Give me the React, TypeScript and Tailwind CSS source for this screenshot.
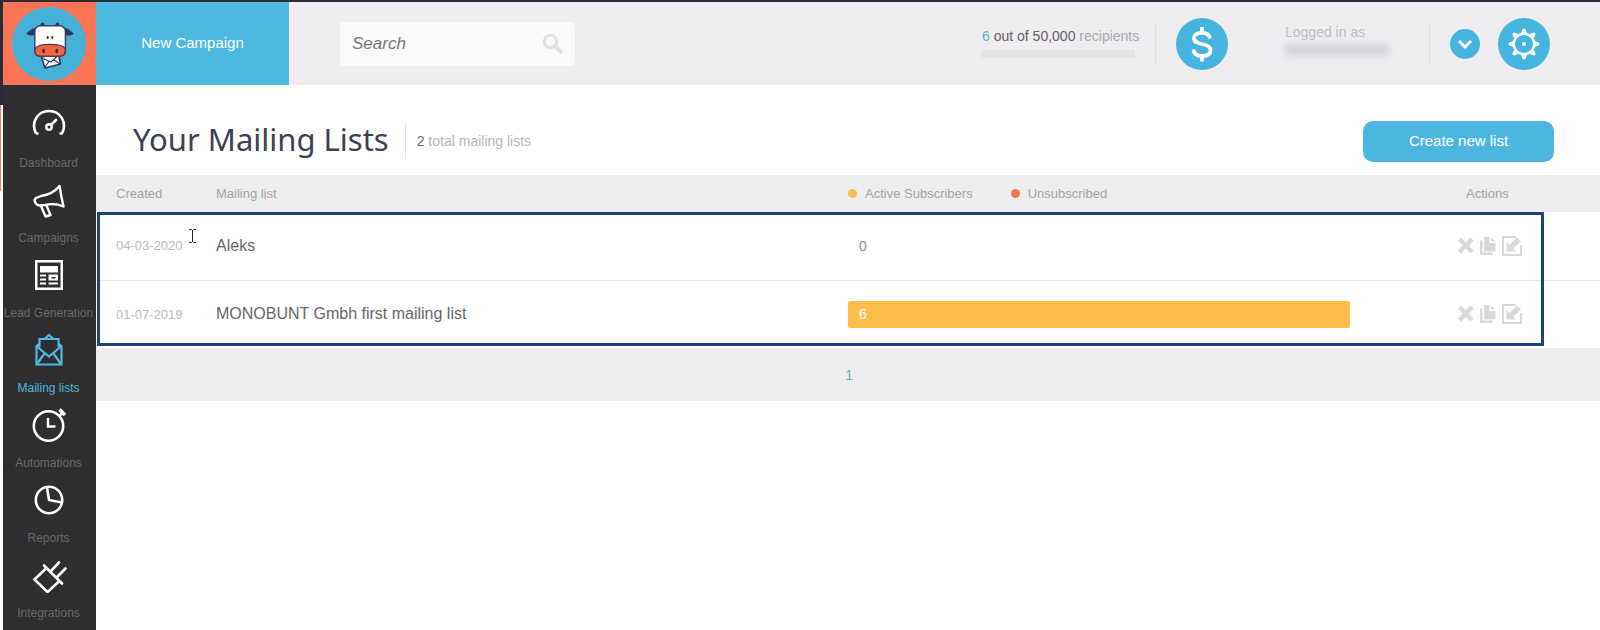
import React from "react";

type IconProps = { className?: string };

const stroke = {
  fill: "none",
  stroke: "currentColor",
  strokeWidth: 2.6,
  strokeLinecap: "round" as const,
  strokeLinejoin: "round" as const,
};

function CowLogo() {
  return (
    <svg viewBox="0 0 74 74" className="size-[74px]" aria-hidden="true">
      <circle cx="37" cy="37" r="37" fill="#45b1d8" />
      <path d="M14 26.500C17 25 19 21 24 21V27.500C21 29 17 29 14 26.500Z" fill="#2d3763" />
      <path d="M62 26.500C59 25 57 21 52 21V27.500C55 29 59 29 62 26.500Z" fill="#2d3763" />
      <circle cx="30.500" cy="17.500" r="2" fill="#2d3763" />
      <circle cx="45.500" cy="17.500" r="2" fill="#2d3763" />
      <path d="M29.500 50L46.500 47L48.500 57L33 61Z" fill="#fff" stroke="#2d3763" strokeWidth="1.600" strokeLinejoin="round" />
      <path d="M31 51.500L39 55L46 48.500M33 60L37 54.500M48 57L42 53" fill="none" stroke="#2d3763" strokeWidth="1.200" />
      <rect x="22.800" y="18.800" width="30.600" height="30.400" rx="5.500" fill="#fff" stroke="#3d3c58" strokeWidth="1.400" />
      <path d="M23 42C25 35.800 51 35.800 53.200 42V44C53.200 47.500 50.500 49.200 47.500 49.200H29C25.500 49.200 23 47.500 23 44Z" fill="#f0643f" stroke="#5a3a4c" strokeWidth="1.400" />
      <ellipse cx="35.700" cy="30.500" rx="1" ry="1.400" fill="#2d3040" />
      <ellipse cx="40.300" cy="30.500" rx="1" ry="1.400" fill="#2d3040" />
      <ellipse cx="31.500" cy="44" rx="1.500" ry="2.200" fill="#3d2f45" />
      <ellipse cx="44.800" cy="44" rx="1.500" ry="2.200" fill="#3d2f45" />
    </svg>
  );
}

function GaugeIcon({ className }: IconProps) {
  return (
    <svg viewBox="0 0 36 36" className={className} {...stroke}>
      <path d="M5 26.500C-.500 15.500 6.500 4 18 4S36.500 15.500 31 26.500H28.500M5 26.500H7.500" strokeLinecap="butt" />
      <circle cx="18" cy="20" r="2.700" strokeWidth="2.400" />
      <path d="M20 18L25 13" />
    </svg>
  );
}

function MegaphoneIcon({ className }: IconProps) {
  return (
    <svg viewBox="0 0 36 36" className={className} {...stroke} strokeWidth={2.4}>
      <path d="M28.500 4C29.500 10 31 18 32.500 24.500C27 22 20.500 21.500 14 23L9 23.500C4.500 23.500 2 18 5 16L10 14C17 13 24 9.500 28.500 4Z" />
      <path d="M10 24L14.500 34.500L19.500 33L15.500 23.500" />
    </svg>
  );
}

function LayoutIcon({ className }: IconProps) {
  return (
    <svg viewBox="0 0 36 36" className={className} fill="currentColor">
      <path fillRule="evenodd" d="M4 3H32V33H4ZM6.500 5.500V30.500H29.500V5.500Z" />
      <path d="M9 9H27V15.500H9ZM9 17.500H15V19.500H9ZM9 21.500H15V23.500H9ZM9 25.500H15V27.500H9ZM17.500 25.500H27V27.500H17.500Z" />
      <path fillRule="evenodd" d="M17.500 17.500H27V23.500H17.500ZM20.500 20V21.500H24.500V20Z" />
    </svg>
  );
}

function EnvelopeIcon({ className }: IconProps) {
  return (
    <svg viewBox="0 0 36 36" className={className} {...stroke} strokeWidth={2.2} strokeLinejoin="miter">
      <path d="M8.500 14.500V7H27.500V14.500M8 12L5.500 14V32.500H30.500V14L28 12" />
      <path d="M13.500 7L18 3L22.500 7" />
      <path d="M6 14.500L18 24.500L30 14.500M6 32L13.500 21.500M30 32L22.500 21.500" />
    </svg>
  );
}

function StopwatchIcon({ className }: IconProps) {
  return (
    <svg viewBox="0 0 36 36" className={className} {...stroke}>
      <circle cx="17.500" cy="19" r="14.700" />
      <path d="M17 11V19.500H24.500" strokeWidth="2.400" strokeLinecap="butt" strokeLinejoin="miter" />
      <path d="M28.500 2.500L34 8" strokeWidth="3.600" strokeLinecap="butt" />
      <path d="M29.500 8L31 6" />
    </svg>
  );
}

function PieIcon({ className }: IconProps) {
  return (
    <svg viewBox="0 0 36 36" className={className} {...stroke}>
      <circle cx="18" cy="18" r="13.200" />
      <path d="M16 5.500L18 18L31 20.500" />
    </svg>
  );
}

function PlugIcon({ className }: IconProps) {
  return (
    <svg viewBox="0 0 36 36" className={className} {...stroke} strokeLinejoin="miter">
      <path d="M13 8.500L31 26.500M15.500 11L3.500 22.500L16.500 35L28.500 24" />
      <path d="M19.500 14.500L28 5.500M25.500 20.500L34.500 11.500" />
    </svg>
  );
}

function SearchIcon() {
  return (
    <svg viewBox="0 0 22 22" className="size-[22px] text-[#e1e1e3]" fill="none" stroke="currentColor">
      <circle cx="8.500" cy="8.500" r="6.200" strokeWidth="3" />
      <path d="M13 13L20 20" strokeWidth="4" />
    </svg>
  );
}

function DollarIcon() {
  return (
    <svg viewBox="0 0 52 52" className="size-[52px]" fill="none" stroke="#fff" strokeWidth="3.800">
      <path d="M34 20.500C33.500 16.500 31 14.800 26 14.800C21 14.800 18 17 18 20.200C18 24 21.500 25 26 26C31 27 34.500 28.500 34.500 32.300C34.500 36 31.500 38 26 38C20.500 38 17.800 36 17.500 31.300" />
      <path d="M26 9V16M26 37V43.500" />
    </svg>
  );
}

function GearIcon() {
  const angles = [0, 45, 90, 135, 180, 225, 270, 315];
  return (
    <svg viewBox="0 0 52 52" className="size-[52px]" fill="none" stroke="#fff">
      <circle cx="26" cy="26" r="10.200" strokeWidth="2.400" />
      <circle cx="26" cy="26" r="2" fill="#fff" stroke="none" />
      {angles.map((a) => (
        <path key={a} d="M22.800 16L24.700 10.700H27.300L29.200 16Z" fill="#fff" stroke="none" transform={`rotate(${a} 26 26)`} />
      ))}
    </svg>
  );
}

function DeleteIcon() {
  return (
    <svg viewBox="0 0 18 20" className="h-5 w-[18px]" fill="none" stroke="currentColor" strokeWidth="4.600">
      <path d="M2.500 3L15 16M15 3L2.500 16" />
    </svg>
  );
}

function CopyIcon() {
  return (
    <svg viewBox="0 0 18 20" className="h-5 w-[18px]" fill="currentColor">
      <path d="M1 4.500H3.500V16.500H13.500V19H1Z" />
      <path d="M5 1H10.500V7H16.500V15.500H5ZM12 1L16.500 5.500H12Z" />
    </svg>
  );
}

function EditIcon() {
  return (
    <svg viewBox="0 0 22 20" className="h-5 w-[22px]" fill="currentColor">
      <path d="M1 0H15V2H3V18H19V9H21V20H1Z" />
      <path d="M5.500 15.500V6.500L8.500 9L16 1.500L20 5L12.500 12.500L15 15.500Z" />
    </svg>
  );
}

const navItems = [
  { label: "Dashboard", Icon: GaugeIcon },
  { label: "Campaigns", Icon: MegaphoneIcon },
  { label: "Lead Generation", Icon: LayoutIcon },
  { label: "Mailing lists", Icon: EnvelopeIcon, active: true },
  { label: "Automations", Icon: StopwatchIcon },
  { label: "Reports", Icon: PieIcon },
  { label: "Integrations", Icon: PlugIcon },
];

const lists = [
  { created: "04-03-2020", name: "Aleks", active: 0, share: 0 },
  { created: "01-07-2019", name: "MONOBUNT Gmbh first mailing list", active: 6, share: 100 },
];

function Sidebar() {
  return (
    <aside className="flex w-[93px] shrink-0 flex-col bg-[#2e2d2f]">
      <a href="#home" aria-label="Home" className="flex h-[83px] items-center justify-center bg-[#fb7556] pr-[2px]">
        <CowLogo />
      </a>
      <nav className="flex flex-col pt-[22px] pr-[2px]">
        {navItems.map(({ label, Icon, active }) => (
          <a
            key={label}
            href="#"
            aria-current={active ? "page" : undefined}
            className={
              active
                ? "flex h-[75px] flex-col items-center gap-[11px] text-[#4fb9df]"
                : "flex h-[75px] flex-col items-center gap-[11px] text-[#6a696b]"
            }
          >
            <Icon className={active ? "size-9 shrink-0" : "size-9 shrink-0 text-white"} />
            <span className="text-xs leading-[18px] whitespace-nowrap">{label}</span>
          </a>
        ))}
      </nav>
    </aside>
  );
}

function TopBar() {
  return (
    <header className="flex h-[83px] items-stretch bg-[#efedf0]">
      <button className="w-[193px] shrink-0 bg-[#4db8e0] text-[15px] text-white">New Campaign</button>
      <div className="flex grow items-center pl-[51px]">
        <label className="flex h-11 w-[235px] items-center justify-between rounded-sm bg-[#fafafa] pr-[11px] pl-3">
          <input
            type="text"
            aria-label="Search"
            placeholder="Search"
            className="w-40 bg-transparent text-[17px] italic outline-none placeholder:text-[#77777a]"
          />
          <SearchIcon />
        </label>
      </div>
      <div className="flex items-center pr-[50px]">
        <div className="flex w-[153px] flex-col gap-1 pb-1">
          <p className="text-sm leading-5 whitespace-nowrap text-[#a9a9ad]">
            <span className="text-[#55aeca]">6</span> <span className="text-[#626266]">out of 50,000</span> recipients
          </p>
          <div className="h-2 bg-[#e4e3e5]" />
        </div>
        <div className="ml-5 h-10 w-px bg-[#dedde0]" />
        <button aria-label="Billing" className="ml-5 rounded-full bg-[#45b4de]">
          <DollarIcon />
        </button>
        <div className="ml-[57px] flex w-[144px] flex-col gap-[2px] pb-[10px]">
          <p className="text-sm leading-5 text-[#bdbcc0]">Logged in as</p>
          <div className="h-3 w-[104px] bg-[#d5d4d7] blur-[3px]" />
        </div>
        <div className="h-10 w-px bg-[#dedde0]" />
        <button
          aria-label="Open account menu"
          className="ml-5 flex size-[30px] items-center justify-center rounded-full bg-[#45b4de]"
        >
          <svg viewBox="0 0 16 16" className="size-4" fill="none" stroke="#fff" strokeWidth="3">
            <path d="M2 5L8 11L14 5" />
          </svg>
        </button>
        <button aria-label="Settings" className="ml-[18px] rounded-full bg-[#45b4de]">
          <GearIcon />
        </button>
      </div>
    </header>
  );
}

function ListsTable() {
  return (
    <div className="relative">
      <table className="w-full table-fixed border-collapse text-left">
        <colgroup>
          <col className="w-[120px]" />
          <col />
          <col className="w-[609px]" />
          <col className="w-[143px]" />
        </colgroup>
        <thead>
          <tr className="h-[37px] bg-[#efedf0] text-[13px] text-[#a3a3a6]">
            <th className="pl-5 font-normal">Created</th>
            <th className="font-normal">Mailing list</th>
            <th className="font-normal">
              <span className="flex items-center">
                <span className="mr-2 size-[9px] rounded-full bg-[#f9bd4f]" />
                Active Subscribers
                <span className="mr-2 ml-[38px] size-[9px] rounded-full bg-[#ea7a48]" />
                Unsubscribed
              </span>
            </th>
            <th className="pl-[9px] font-normal">Actions</th>
          </tr>
        </thead>
        <tbody>
          {lists.map((list) => (
            <tr key={list.name} className="h-[68px] border-t border-[#e9e9eb] first:border-t-0">
              <td className="pl-5 text-[13px] text-[#b9b9bc]">{list.created}</td>
              <td className="text-base text-[#66666a]">{list.name}</td>
              <td>
                {list.share > 0 ? (
                  <div className="w-[502px]">
                    <div
                      className="rounded-xs bg-[#ffbe4b] pl-[11px] text-sm leading-[27px] text-white"
                      style={{ width: `${list.share}%` }}
                    >
                      {list.active}
                    </div>
                  </div>
                ) : (
                  <span className="pl-[11px] text-sm text-[#8c8c90]">{list.active}</span>
                )}
              </td>
              <td>
                <div className="flex gap-1 text-[#d9d9dd]">
                  <button aria-label={`Delete ${list.name}`}>
                    <DeleteIcon />
                  </button>
                  <button aria-label={`Copy ${list.name}`}>
                    <CopyIcon />
                  </button>
                  <button aria-label={`Edit ${list.name}`}>
                    <EditIcon />
                  </button>
                </div>
              </td>
            </tr>
          ))}
        </tbody>
      </table>
      <div className="pointer-events-none absolute top-[37px] right-14 bottom-[2px] left-px border-[3px] border-[#1a447a]" />
      <svg viewBox="0 0 7 14" className="absolute top-[54px] left-[93px] h-[14px] w-[7px]" fill="none" stroke="#222">
        <path d="M0 .5H2.500L3.500 1.500L4.500 .5H7M3.500 1V13M0 13.500H2.500L3.500 12.500L4.500 13.500H7" />
      </svg>
    </div>
  );
}

export default function App() {
  return (
    <div className="flex min-h-screen flex-col bg-white font-['Liberation_Sans',Arial,sans-serif]">
      <div className="h-[2px] bg-[#2f2b37]" />
      <div className="flex grow">
        <div className="flex w-[3px] shrink-0 flex-col">
          <div className="h-[103px] bg-[#292b3a]" />
          <div className="h-[86px] w-px bg-[#f27a5c]" />
        </div>
        <Sidebar />
        <div className="flex min-w-0 grow flex-col">
          <TopBar />
          <main>
            <div className="flex h-[90px] items-center pt-[22px] pr-[46px] pl-[37px]">
              <h1 className="pb-1 font-['Noto_Sans',sans-serif] text-[31px] leading-10 text-[#3d4052]">
                Your Mailing Lists
              </h1>
              <p className="ml-4 border-l border-[#e2e2e5] pl-[11px] text-sm leading-9 text-[#b5b5b9]">
                <span className="text-[#6c6c70]">2</span> total mailing lists
              </p>
              <button className="ml-auto h-[41px] w-[191px] rounded-[10px] bg-[#4bb7df] text-[15px] text-white">
                Create new list
              </button>
            </div>
            <ListsTable />
            <nav aria-label="Pagination" className="flex h-[53px] items-center bg-[#efedf0] pr-[747px]">
              <a href="#page-1" className="ml-auto text-sm text-[#6fb0a4]">
                1
              </a>
            </nav>
          </main>
        </div>
      </div>
    </div>
  );
}
